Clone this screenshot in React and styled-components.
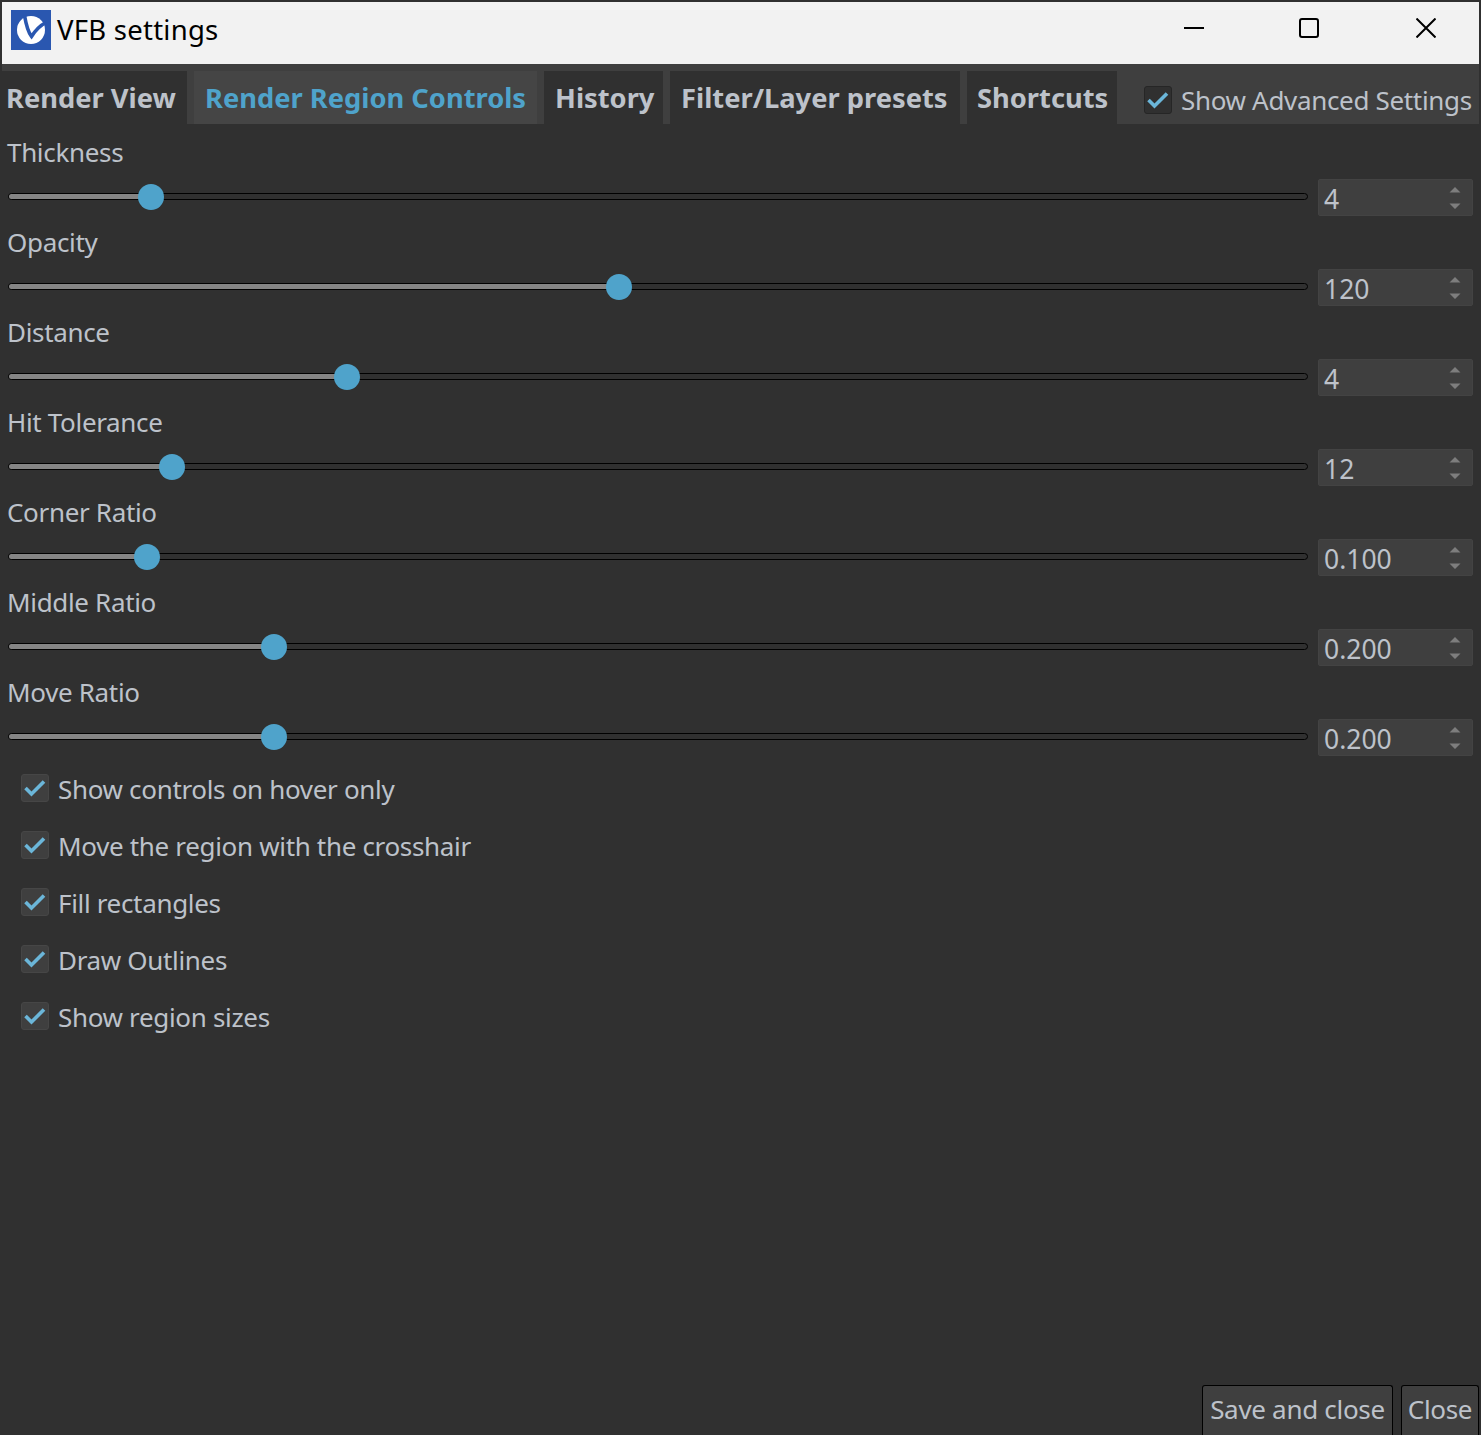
import React from "react";
import styled, { createGlobalStyle } from "styled-components";

const Global = createGlobalStyle`
  html, body { margin: 0; padding: 0; background: #303030; overflow: hidden; }
  #root { height: 1435px; }
`;
const uiFont = `"Noto Sans", "Open Sans", sans-serif`;

const Win = styled.div`
  box-sizing: border-box; width: 1481px; height: 1435px; background: #303030;
  padding: 2px 2px 0 2px; display: flex; flex-direction: column;
  font-family: ${uiFont}; color: #bdc2ca; overflow: hidden;
`;
const TitleBar = styled.div`
  height: 62px; background: #f2f2f2; display: flex; align-items: center; flex: none;
`;
const Logo = styled.svg`width: 40px; height: 40px; margin-left: 9px; margin-bottom: 6px; flex: none;`;
const TitleText = styled.div`
  font-size: 27.5px; color: #000; margin-left: 6px; letter-spacing: .25px; line-height: 40px; padding-bottom: 6px;
`;
const WinButtons = styled.div`
  margin-left: auto; align-self: flex-start; display: flex; padding: 16px 43px 0 0;
`;
const WinBtn = styled.svg`
  width: 20px; height: 20px; margin-left: ${p => p.$left}px; flex: none;
`;
const TabStrip = styled.div`
  height: 60px; background: #3f3f3f; flex: none; display: flex; align-items: flex-end; gap: 7px;
`;
const Tab = styled.div`
  height: 53px; box-sizing: border-box; display: flex; align-items: center; flex: none;
  width: ${p => p.$w}px; padding-left: ${p => p.$pad}px; padding-bottom: 1px;
  background: ${p => (p.$active ? "#454545" : "#303030")};
  color: ${p => (p.$active ? "#4fa3cb" : "#bdc2ca")};
  font-size: 27.3px; font-weight: 700; white-space: nowrap;
`;
const AdvancedCheck = styled.div`
  display: flex; align-items: center; margin-left: 20px; height: 53px; padding-top: 5px; box-sizing: border-box; flex: none;
`;
const CheckBox = styled.div`
  width: 28px; height: 28px; box-sizing: border-box; border-radius: 3px; flex: none;
  background: ${p => (p.$dark ? "#303030" : "#3f3f3f")};
  border: 1px solid ${p => (p.$dark ? "#262626" : "#464646")};
  display: flex; align-items: center; justify-content: center;
`;
const CheckLabel = styled.span`
  font-size: 26px; letter-spacing: -.33px; margin-left: 9px; white-space: nowrap; padding-top: ${p => p.$top || 0}px;
`;
const Body = styled.div`flex: 1; display: flex; flex-direction: column;`;
const SliderRow = styled.div`height: 90px; box-sizing: border-box; padding: 8px 6px 0 5px; flex: none;`;
const SliderLabel = styled.div`font-size: 26px; letter-spacing: -.33px; line-height: 40px; height: 40px;`;
const SliderLine = styled.div`display: flex; align-items: center; height: 37px; margin-top: 7px; gap: 10px;`;
const TrackWrap = styled.div`
  position: relative; width: 1300px; height: 26px; margin-left: 1px; margin-top: -2px;
  display: flex; align-items: center;
`;
const Track = styled.div`
  width: 100%; height: 7px; box-sizing: border-box; background: #303030;
  border: 1px solid #000; border-radius: 4px; overflow: hidden;
`;
const Fill = styled.div`height: 100%; background: #848484;`;
const Thumb = styled.div`
  position: absolute; top: 0; width: 26px; height: 26px; margin-left: -13px; border-radius: 50%; background: #4fa3cb;
`;
const Spin = styled.div`
  width: 155px; height: 37px; box-sizing: border-box; background: #3f3f3f; border: 1px solid #434343; border-radius: 2px;
  display: flex; align-items: center; justify-content: space-between; padding: 2px 11px 0 5px;
  font-size: 26.5px; flex: none;
`;
const SpinArrows = styled.svg`width: 12px; height: 26px; flex: none; margin-top: -2px;`;
const Checks = styled.div`display: flex; flex-direction: column; padding-left: 19px; margin-top: 5px;`;
const CheckRow = styled.div`height: 57px; display: flex; align-items: center;`;
const Footer = styled.div`margin-top: auto; display: flex; justify-content: flex-end; gap: 8px; flex: none;`;
const Button = styled.div`
  height: 50px; width: ${p => p.$w}px; box-sizing: border-box; background: #3f3f3f; padding-bottom: 3px;
  border: 1px solid #000; border-bottom: none; border-radius: 3px 3px 0 0;
  display: flex; align-items: center; justify-content: center; font-size: 26px; letter-spacing: -.3px;
`;

const Tick = () => (
  <svg width="22" height="22" viewBox="0 0 22 22">
    <path d="M1.5 11 L7.5 17 L20 4.5" fill="none" stroke="#6bb6d9" strokeWidth="3.6" />
  </svg>
);

const sliders = [
  { label: "Thickness", value: "4", x: 151 },
  { label: "Opacity", value: "120", x: 619 },
  { label: "Distance", value: "4", x: 347 },
  { label: "Hit Tolerance", value: "12", x: 172 },
  { label: "Corner Ratio", value: "0.100", x: 147 },
  { label: "Middle Ratio", value: "0.200", x: 274 },
  { label: "Move Ratio", value: "0.200", x: 274 },
];
const checks = [
  "Show controls on hover only",
  "Move the region with the crosshair",
  "Fill rectangles",
  "Draw Outlines",
  "Show region sizes",
];

export default function App() {
  return (
    <Win>
      <Global />
      <TitleBar>
        <Logo viewBox="0 0 40 40">
          <rect width="40" height="40" fill="#2a57b0" />
          <circle cx="20" cy="20" r="14" fill="#fff" />
          <path d="M13.5 5.5 C15 14 17 22 20.5 26.5 C24 21 28 16 35 12.5" fill="none" stroke="#2a57b0" strokeWidth="3.6" />
        </Logo>
        <TitleText>VFB settings</TitleText>
        <WinButtons>
          <WinBtn $left={0} viewBox="0 0 20 20"><path d="M0 10H20" stroke="#000" strokeWidth="2" /></WinBtn>
          <WinBtn $left={95} viewBox="0 0 20 20"><rect x="1" y="1" width="18" height="18" rx="2" fill="none" stroke="#000" strokeWidth="2" /></WinBtn>
          <WinBtn $left={97} viewBox="0 0 20 20"><path d="M.5 .5L19.5 19.5M19.5 .5L.5 19.5" stroke="#000" strokeWidth="2" /></WinBtn>
        </WinButtons>
      </TitleBar>
      <TabStrip>
        <Tab $w={185} $pad={4}>Render View</Tab>
        <Tab $w={343} $pad={11} $active>Render Region Controls</Tab>
        <Tab $w={119} $pad={11}>History</Tab>
        <Tab $w={290} $pad={11}>Filter/Layer presets</Tab>
        <Tab $w={150} $pad={10}>Shortcuts</Tab>
        <AdvancedCheck>
          <CheckBox $dark><Tick /></CheckBox>
          <CheckLabel>Show Advanced Settings</CheckLabel>
        </AdvancedCheck>
      </TabStrip>
      <Body>
        {sliders.map(s => {
          const pos = s.x - 8;
          return (
            <SliderRow key={s.label}>
              <SliderLabel>{s.label}</SliderLabel>
              <SliderLine>
                <TrackWrap>
                  <Track><Fill style={{ width: pos }} /></Track>
                  <Thumb style={{ left: pos }} />
                </TrackWrap>
                <Spin>
                  <span>{s.value}</span>
                  <SpinArrows viewBox="0 0 12 26">
                    <path d="M6 2L11.5 7.5H.5Z M6 24L11.5 18.5H.5Z" fill="#7d7d7d" />
                  </SpinArrows>
                </Spin>
              </SliderLine>
            </SliderRow>
          );
        })}
        <Checks>
          {checks.map(c => (
            <CheckRow key={c}>
              <CheckBox><Tick /></CheckBox>
              <CheckLabel $top={2}>{c}</CheckLabel>
            </CheckRow>
          ))}
        </Checks>
        <Footer>
          <Button $w={191}>Save and close</Button>
          <Button $w={78}>Close</Button>
        </Footer>
      </Body>
    </Win>
  );
}
